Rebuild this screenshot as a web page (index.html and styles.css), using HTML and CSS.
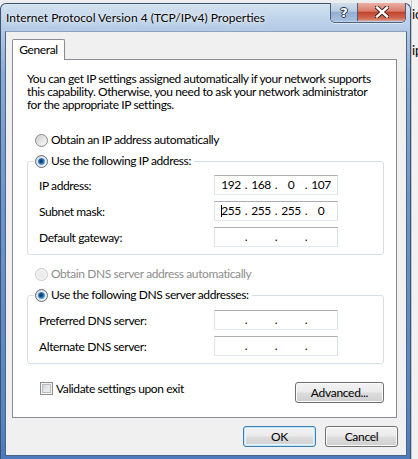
FILE: index.html
```html
<!DOCTYPE html>
<html>
<head>
<meta charset="utf-8">
<link rel="stylesheet" href="styles.css">
</head>
<body>
<svg class="defs" width="0" height="0" aria-hidden="true">
  <defs>
    <linearGradient id="rOuter" x1="0" y1="0" x2="1" y2="1">
      <stop offset="0" stop-color="#d2d2d2"/>
      <stop offset="1" stop-color="#f6f6f6"/>
    </linearGradient>
    <linearGradient id="rInner" x1="0" y1="0" x2="1" y2="1">
      <stop offset="0" stop-color="#cfcfcf"/>
      <stop offset="1" stop-color="#fafafa"/>
    </linearGradient>
    <radialGradient id="rDot" cx="0.45" cy="0.45" r="0.6">
      <stop offset="0" stop-color="#0b2f57"/>
      <stop offset="0.45" stop-color="#1c5a96"/>
      <stop offset="1" stop-color="#7cc0ef"/>
    </radialGradient>
  </defs>
</svg>

<div class="window">
  <div class="titlebar">
    <span class="title">Internet Protocol Version 4 (TCP/IPv4) Properties</span>
    <div class="caption-btns">
      <div class="cbtn help">?</div>
      <div class="cbtn close">
        <svg width="14" height="12" viewBox="0 0 14 12">
          <path d="M2 1.5 L12 10.5 M12 1.5 L2 10.5" stroke="#3b1a14" stroke-width="4.2" stroke-linecap="square"/>
          <path d="M2 1.5 L12 10.5 M12 1.5 L2 10.5" stroke="#ffffff" stroke-width="2.4" stroke-linecap="square"/>
        </svg>
      </div>
    </div>
  </div>

  <div class="client">
    <div class="tabs"><div class="tab">General</div></div>
    <div class="panel">
      <p class="intro">You can get IP settings assigned automatically if your network supports<br>this capability. Otherwise, you need to ask your network administrator<br>for the appropriate IP settings.</p>

      <div class="radio-row r-first">
        <svg class="radio" width="13" height="13" viewBox="0 0 13 13"><circle cx="6.5" cy="6.5" r="6" fill="url(#rOuter)" stroke="#8b8b8b"/><circle cx="6.5" cy="6.5" r="4" fill="url(#rInner)"/></svg>
        <span>Obtain an IP address automatically</span>
      </div>

      <div class="group g-ip">
        <div class="radio-row legend">
          <svg class="radio" width="13" height="13" viewBox="0 0 13 13"><circle cx="6.5" cy="6.5" r="6" fill="url(#rOuter)" stroke="#5a6e85"/><circle cx="6.5" cy="6.5" r="4.2" fill="#e6eef6"/><circle cx="6.5" cy="6.5" r="3.5" fill="url(#rDot)"/></svg>
          <span>Use the following IP address:</span>
        </div>
        <div class="fields">
          <span class="flabel">IP address:</span>
          <div class="ip"><span class="seg">192</span><span class="dot">.</span><span class="seg">168</span><span class="dot">.</span><span class="seg">0</span><span class="dot">.</span><span class="seg">107</span></div>
          <span class="flabel">Subnet mask:</span>
          <div class="ip"><span class="seg"><span class="caret"></span>255</span><span class="dot">.</span><span class="seg">255</span><span class="dot">.</span><span class="seg">255</span><span class="dot">.</span><span class="seg">0</span></div>
          <span class="flabel">Default gateway:</span>
          <div class="ip"><span class="seg"></span><span class="dot">.</span><span class="seg"></span><span class="dot">.</span><span class="seg"></span><span class="dot">.</span><span class="seg"></span></div>
        </div>
      </div>

      <div class="radio-row r-dns disabled">
        <svg class="radio" width="13" height="13" viewBox="0 0 13 13"><circle cx="6.5" cy="6.5" r="6" fill="#f4f4f4" stroke="#c9c9c9"/><circle cx="6.5" cy="6.5" r="4" fill="#ececec"/></svg>
        <span>Obtain DNS server address automatically</span>
      </div>

      <div class="group g-dns">
        <div class="radio-row legend">
          <svg class="radio" width="13" height="13" viewBox="0 0 13 13"><circle cx="6.5" cy="6.5" r="6" fill="url(#rOuter)" stroke="#5a6e85"/><circle cx="6.5" cy="6.5" r="4.2" fill="#e6eef6"/><circle cx="6.5" cy="6.5" r="3.5" fill="url(#rDot)"/></svg>
          <span>Use the following DNS server addresses:</span>
        </div>
        <div class="fields">
          <span class="flabel">Preferred DNS server:</span>
          <div class="ip"><span class="seg"></span><span class="dot">.</span><span class="seg"></span><span class="dot">.</span><span class="seg"></span><span class="dot">.</span><span class="seg"></span></div>
          <span class="flabel">Alternate DNS server:</span>
          <div class="ip"><span class="seg"></span><span class="dot">.</span><span class="seg"></span><span class="dot">.</span><span class="seg"></span><span class="dot">.</span><span class="seg"></span></div>
        </div>
      </div>

      <div class="bottom-row">
        <div class="check-row"><span class="checkbox"></span><span>Validate settings upon exit</span></div>
        <button class="btn advanced">Advanced...</button>
      </div>
    </div>

    <div class="dlg-buttons">
      <button class="btn default">OK</button>
      <button class="btn">Cancel</button>
    </div>
  </div>
</div>

<div class="behind">
  <span class="bt1">ic</span>
  <span class="bt2">ip</span>
</div>
</body>
</html>
```

FILE: styles.css
```css
html, body {
  margin: 0;
  padding: 0;
  overflow: hidden;
}

body {
  width: 418px;
  height: 459px;
  display: flex;
  align-items: flex-start;
  background: #ecedee;
  font-family: "Lato", "Noto Sans", sans-serif;
  font-size: 12px;
  color: #000;
}

.defs {
  position: absolute;
  width: 0;
  height: 0;
}

/* ---------- window frame ---------- */
.window {
  flex: none;
  box-sizing: border-box;
  width: 411px;
  height: 460px;
  margin-top: 3px;
  padding: 0 3px 4px 4px;
  border: 1px solid #3e536e;
  border-bottom: none;
  border-radius: 6px 6px 0 0;
  background: linear-gradient(to bottom, #d5e3f2 0px, #c0d4ea 14px, #b2c9e4 28px, #89aad6 70px, #6b95cc 200px, #5683c3 420px, #4a78bb 460px);
}

.titlebar {
  display: flex;
  align-items: flex-start;
  height: 27px;
}

.title {
  align-self: center;
  padding-left: 1px;
  margin-top: -1px;
  white-space: nowrap;
  text-shadow: 0 0 6px rgba(255, 255, 255, 0.95), 0 0 2px rgba(255, 255, 255, 0.9);
}

.caption-btns {
  margin-left: auto;
  margin-right: 1px;
  margin-top: -1px;
  display: flex;
  height: 19px;
  border: 1px solid #4b5f7a;
  border-top: none;
  border-radius: 0 0 5px 5px;
  overflow: hidden;
  box-shadow: 0 1px 0 rgba(255, 255, 255, 0.55);
}

.cbtn {
  display: flex;
  align-items: center;
  justify-content: center;
  height: 18px;
}

.help {
  width: 26px;
  border-right: 1px solid #4b5f7a;
  background: linear-gradient(to bottom, #d2deec 0%, #b9cbe0 45%, #93aed0 52%, #a8c0dd 100%);
  color: #fff;
  font-family: "DejaVu Sans", sans-serif;
  font-weight: bold;
  font-size: 13px;
  text-shadow: 0 0 1px #1f2f45, 1px 0 0 #2a3c55, -1px 0 0 #2a3c55, 0 1px 0 #2a3c55, 0 -1px 0 #2a3c55;
}

.close {
  width: 47px;
  background: linear-gradient(to bottom, #eab0a4 0%, #d97d6b 45%, #c3442c 52%, #cf6a52 85%, #e0a08c 100%);
}

/* ---------- client area ---------- */
.client {
  box-sizing: border-box;
  width: 402px;
  padding: 7px 9px 8px 6px;
  border: 1px solid #4b6384;
  border-top-color: #8ea2bc;
  background: #f0f0f0;
  letter-spacing: -0.4px;
}

.tabs {
  display: flex;
  height: 20px;
}

.tab {
  position: relative;
  z-index: 1;
  box-sizing: border-box;
  width: 53px;
  height: 21px;
  border: 1px solid #898c95;
  border-bottom: none;
  border-radius: 2px 2px 0 0;
  background: #fff;
  text-align: center;
  line-height: 20px;
}

.panel {
  box-sizing: border-box;
  width: 385px;
  padding: 12px 12px 14px 14px;
  border: 1px solid #898c95;
  background: #fff;
}

.intro {
  margin: 0;
  line-height: 13px;
  white-space: nowrap;
}

.radio-row {
  display: flex;
  align-items: center;
  height: 14px;
  line-height: 14px;
  white-space: nowrap;
}

.radio {
  flex: none;
  margin-right: 3px;
}

.r-first {
  margin-top: 22px;
  padding-left: 8px;
}

.r-dns {
  margin-top: 12px;
  padding-left: 8px;
}

.disabled {
  color: #8d8d8d;
}

.group {
  position: relative;
  border: 1px solid #d5dfe5;
  border-radius: 3px;
  padding: 13px 0 7px 11px;
}

.g-ip {
  margin-top: 14px;
}

.g-dns {
  margin-top: 14px;
  padding-top: 14px;
}

.legend {
  position: absolute;
  top: -8px;
  left: 6px;
  padding: 0 3px 0 1px;
  background: #fff;
}

.fields {
  display: grid;
  grid-template-columns: 175px 124px;
  grid-auto-rows: 20px;
  row-gap: 6px;
  align-items: center;
  white-space: nowrap;
}

.ip {
  box-sizing: border-box;
  height: 20px;
  display: flex;
  padding-left: 3px;
  border: 1px solid #e3e9ef;
  border-top-color: #abadb3;
  border-left-color: #e2e3ea;
  border-right-color: #dbdfe6;
  background: #fff;
  line-height: 18px;
}

.seg {
  width: 26px;
  text-align: center;
  white-space: nowrap;
}

.dot {
  width: 4px;
  text-align: center;
}

.caret {
  display: inline-block;
  width: 1px;
  height: 12px;
  margin-right: -1px;
  vertical-align: -2px;
  background: #000;
}

/* ---------- bottom ---------- */
.bottom-row {
  display: flex;
  justify-content: space-between;
  align-items: flex-start;
  margin-top: 18px;
}

.check-row {
  display: flex;
  align-items: center;
  height: 13px;
  margin-left: 13px;
  line-height: 13px;
  white-space: nowrap;
}

.checkbox {
  box-sizing: border-box;
  width: 13px;
  height: 13px;
  margin-right: 3px;
  border: 1px solid #8e8f8f;
  background: linear-gradient(135deg, #c9cdd2 0%, #e4e6e8 50%, #f7f7f7 100%);
  box-shadow: inset 0 0 0 1px #f4f4f4, inset 0 0 0 2px #b9bdc2;
}

.btn {
  box-sizing: border-box;
  height: 21px;
  padding: 0;
  border: 1px solid #707070;
  border-radius: 3px;
  background: linear-gradient(to bottom, #f2f2f2 0%, #ebebeb 48%, #dddddd 52%, #cfcfcf 100%);
  box-shadow: inset 0 0 0 1px #fbfbfb;
  font-family: inherit;
  font-size: 12px;
  letter-spacing: -0.3px;
  color: #000;
}

.advanced {
  width: 89px;
}

.dlg-buttons {
  display: flex;
  justify-content: flex-end;
  gap: 9px;
  margin-top: 8px;
  margin-right: -1px;
}

.dlg-buttons .btn {
  width: 73px;
}

.btn.default {
  border-color: #3c7fb1;
  box-shadow: inset 0 0 0 1px #c3e5f7, inset 0 0 0 2px #eaf6fd;
}

/* ---------- what lies behind the window ---------- */
.behind {
  flex: 1;
  display: flex;
  flex-direction: column;
  height: 459px;
  overflow: hidden;
  background: #f1f1f1;
  border-left: 1px solid #c4c6c9;
  font-size: 13px;
  white-space: nowrap;
}

.bt1 {
  margin-top: 7px;
  line-height: 14px;
}

.bt2 {
  margin-top: 22px;
  line-height: 14px;
}
```
